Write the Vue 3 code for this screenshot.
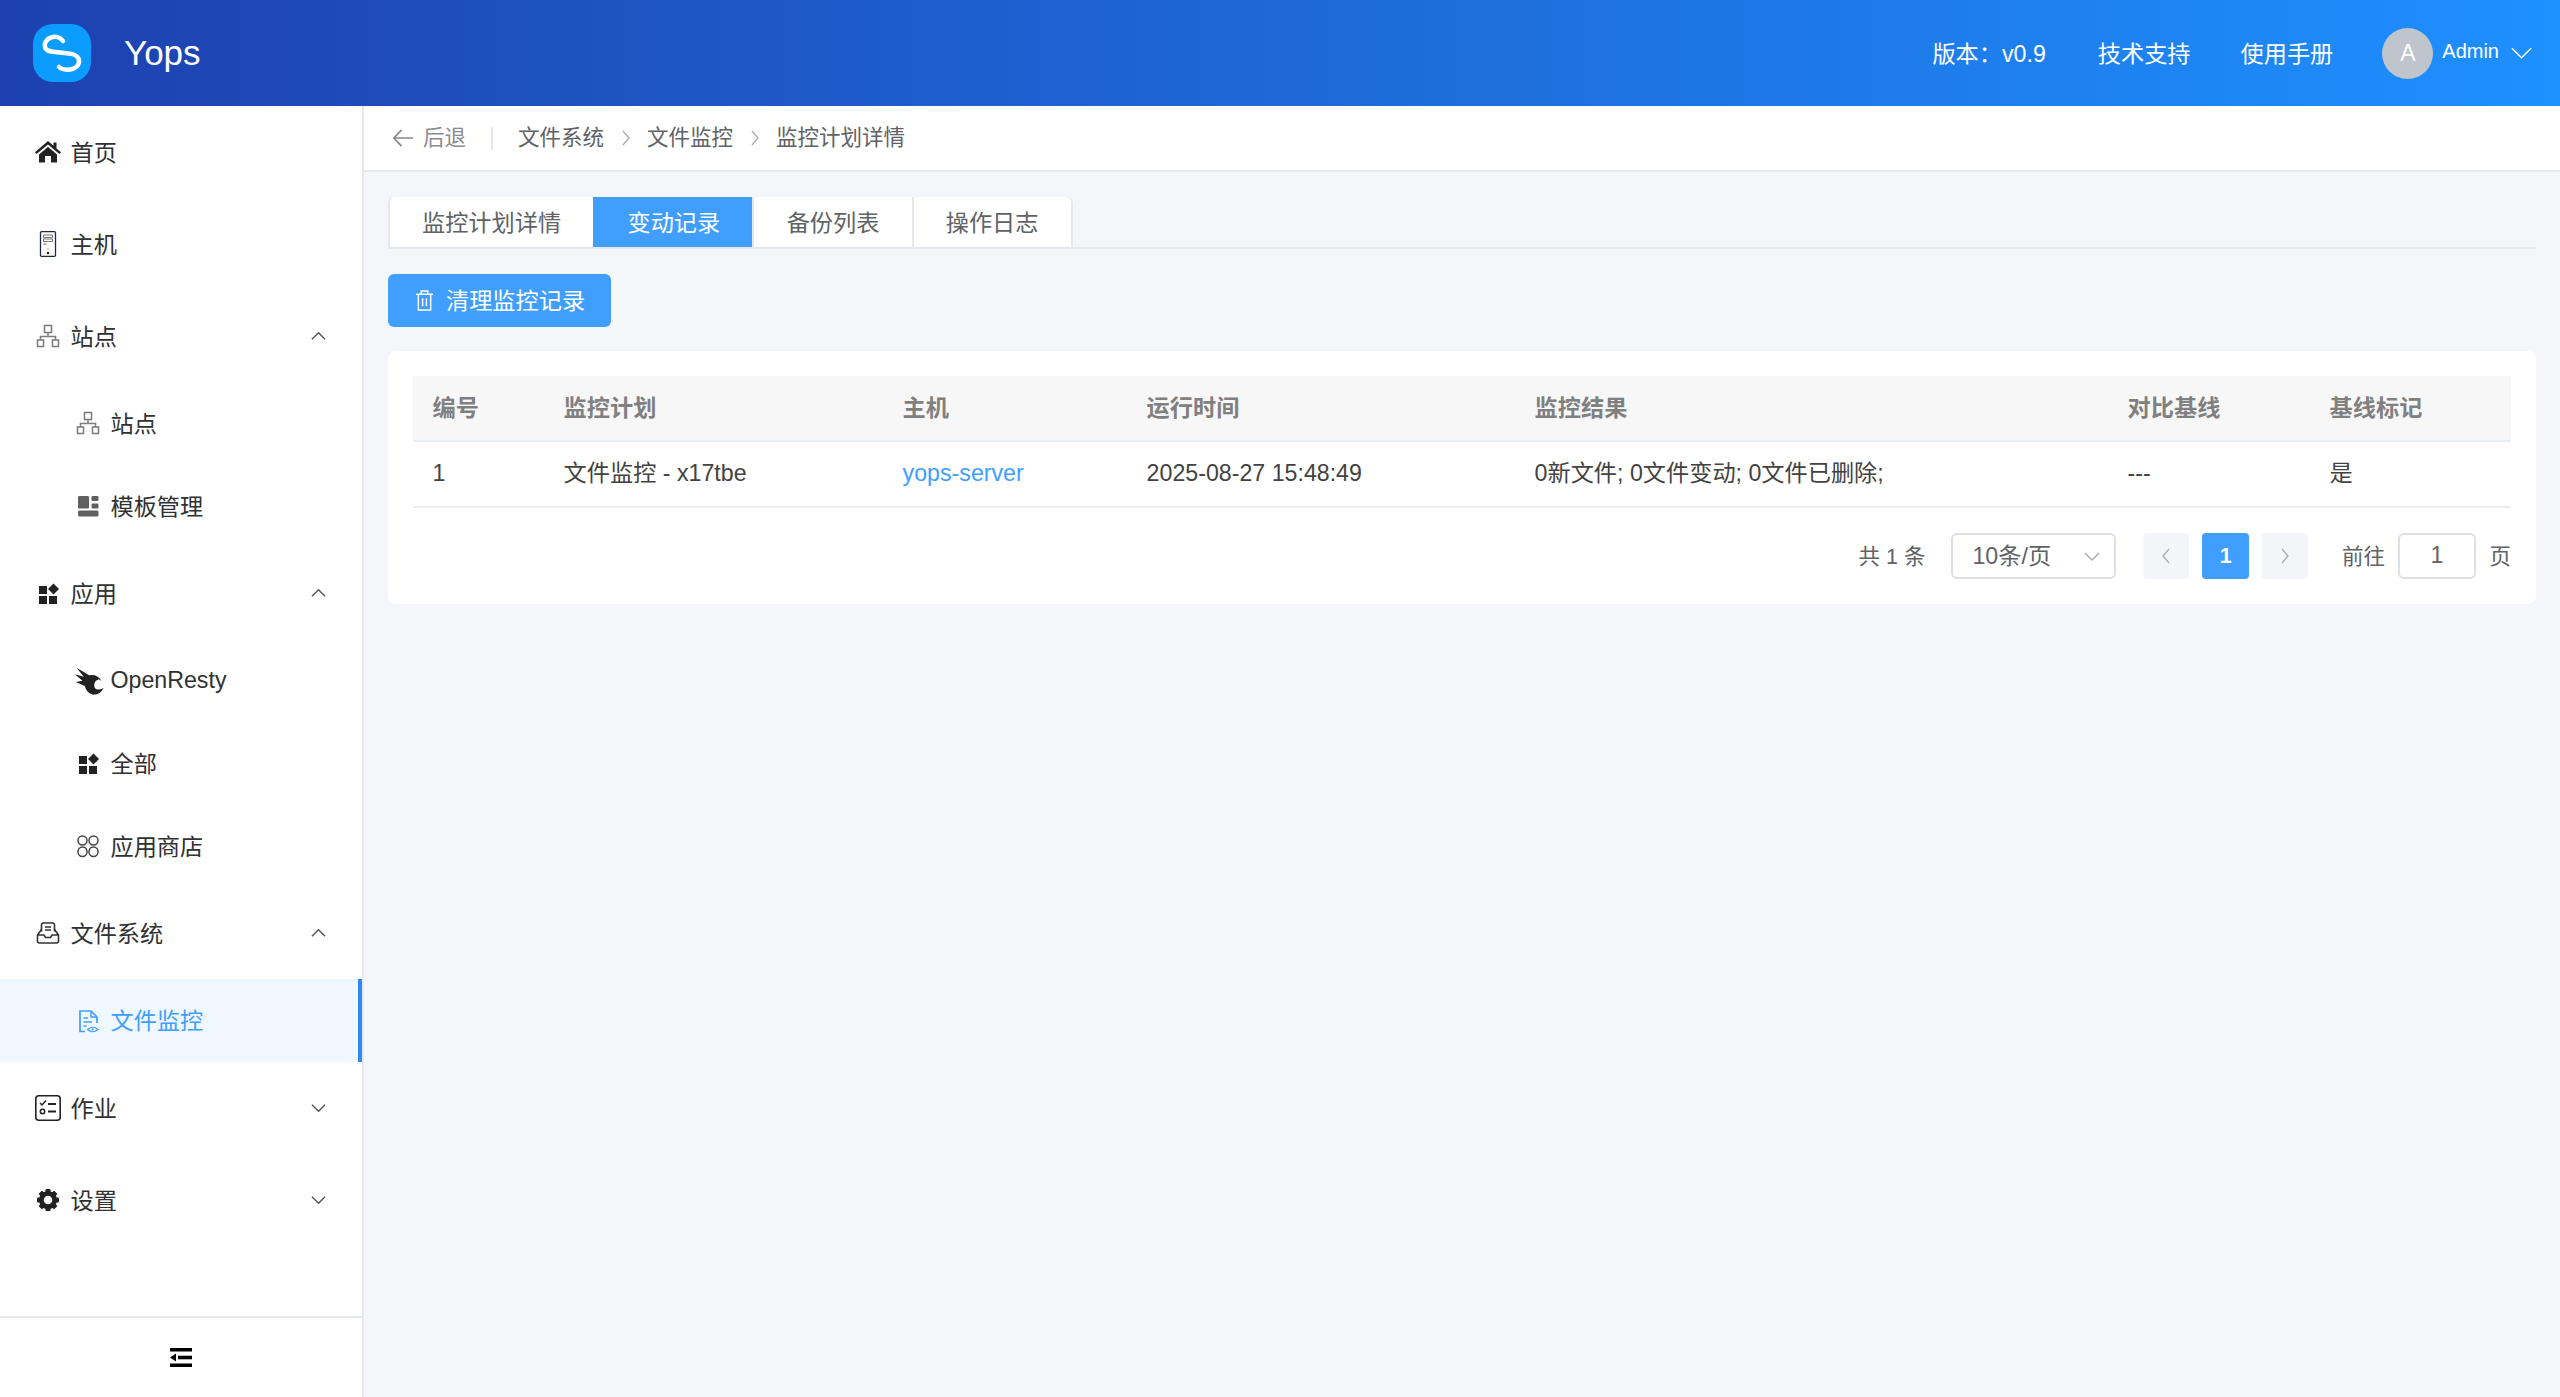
<script setup>
const heads = ["编号", "监控计划", "主机", "运行时间", "监控结果", "对比基线", "基线标记"];
const tabs = ["监控计划详情", "变动记录", "备份列表", "操作日志"];
const gearTeeth = [0, 45, 90, 135, 180, 225, 270, 315];
</script>

<template>
  <div class="layout">
    <header class="topbar">
      <svg class="logo" viewBox="0 0 58 58">
        <rect width="58" height="58" rx="20" fill="#0a9dff" />
        <path d="M30 17C27 13 22 12 18 13.500C13 15 11 20 12 23C13 27 17 27.500 22 28L36 29.500C42 30 46 33 46 37C46 42 42 45 37 45.500C32 46 28 45 26 43" fill="none" stroke="#fff" stroke-width="4.500" stroke-linecap="round" />
      </svg>
      <span class="brand">Yops</span>
      <div class="top-right">
        <span class="version">版本：v0.9</span>
        <span class="top-link support">技术支持</span>
        <span class="top-link manual">使用手册</span>
        <span class="avatar">A</span>
        <span class="admin">Admin</span>
        <svg class="admin-arrow" viewBox="0 0 22 12"><path d="M1 1L11 11L21 1" fill="none" stroke="#fff" stroke-width="1.500" /></svg>
      </div>
    </header>

    <div class="body-row">
      <aside class="sidebar">
        <nav class="menu">
          <div class="item">
            <svg class="ico" viewBox="0 0 26 24" fill="#222"><path d="M13 1L0 12.300L1.600 14L13 4.400L24.400 14L26 12.300L21.500 8.400V2.500H18.500V5.800Z" /><path d="M4 14.400L13 6.800L22 14.400V22.500H16V16H10V22.500H4Z" /></svg>
            <span>首页</span>
          </div>
          <div class="item">
            <svg class="ico" viewBox="0 0 26 26">
              <rect x="5.500" y="0.700" width="15" height="24.600" rx="1" fill="none" stroke="#1c2b4a" stroke-width="1.300" />
              <path d="M8.500 4H17.500V6.500H8.500ZM8.500 8H17.500V10.500H8.500Z" fill="none" stroke="#777" stroke-width="1" />
              <path d="M8.500 12.500H11.500V14H8.500Z" fill="#999" />
              <circle cx="13" cy="22" r="1.300" fill="#222" />
              <circle cx="13" cy="18" r="0.700" fill="#888" />
            </svg>
            <span>主机</span>
          </div>
          <div class="item">
            <svg class="ico" viewBox="0 0 26 26" fill="none" stroke="#808080" stroke-width="1.600">
              <rect x="9.500" y="2.500" width="7" height="7" />
              <rect x="2.500" y="17" width="6" height="6.500" />
              <rect x="17.500" y="17" width="6" height="6.500" />
              <path d="M13 9.500V13.500M5.500 17V13.500H20.500V17" />
            </svg>
            <span>站点</span>
            <svg class="chevron" viewBox="0 0 16 10"><path d="M1 8.500L8 1.500L15 8.500" /></svg>
          </div>
          <div class="item sub">
            <svg class="ico" viewBox="0 0 26 26" fill="none" stroke="#808080" stroke-width="1.600">
              <rect x="9.500" y="2.500" width="7" height="7" />
              <rect x="2.500" y="17" width="6" height="6.500" />
              <rect x="17.500" y="17" width="6" height="6.500" />
              <path d="M13 9.500V13.500M5.500 17V13.500H20.500V17" />
            </svg>
            <span>站点</span>
          </div>
          <div class="item sub">
            <svg class="ico" viewBox="0 0 26 26" fill="#606060">
              <rect x="3" y="3" width="11" height="12.500" rx="1.200" />
              <rect x="16.500" y="3" width="7" height="5" rx="1.200" />
              <rect x="16.500" y="10.500" width="7" height="5" rx="1.200" />
              <rect x="3" y="17.500" width="20.500" height="6" rx="1.500" />
            </svg>
            <span>模板管理</span>
          </div>
          <div class="item">
            <svg class="ico" viewBox="0 0 26 26" fill="#222">
              <rect x="4" y="6" width="8" height="8" />
              <rect x="4" y="16" width="8" height="8" />
              <rect x="14" y="16" width="8" height="8" />
              <path d="M18.500 3.500L24 9L18.500 14.500L13 9Z" />
            </svg>
            <span>应用</span>
            <svg class="chevron" viewBox="0 0 16 10"><path d="M1 8.500L8 1.500L15 8.500" /></svg>
          </div>
          <div class="item sub">
            <svg class="bird" viewBox="155 80 95 90" fill="#222"><path d="M165 85L203 108Q228 104 240 125L232 120Q218 124 218 140Q222 158 246 146Q238 166 215 166Q195 162 190 140L163 128L183 124L160 105L187 112Z" /></svg>
            <span class="latin">OpenResty</span>
          </div>
          <div class="item sub">
            <svg class="ico" viewBox="0 0 26 26" fill="#222">
              <rect x="4" y="6" width="8" height="8" />
              <rect x="4" y="16" width="8" height="8" />
              <rect x="14" y="16" width="8" height="8" />
              <path d="M18.500 3.500L24 9L18.500 14.500L13 9Z" />
            </svg>
            <span>全部</span>
          </div>
          <div class="item sub">
            <svg class="ico" viewBox="0 0 26 26" fill="none" stroke="#444" stroke-width="1.500">
              <rect x="3" y="3" width="9" height="9" rx="4.500" />
              <rect x="14" y="3" width="9" height="9" rx="4.500" />
              <rect x="3" y="14" width="9" height="9.500" rx="4.500" />
              <rect x="14" y="14" width="9" height="9.500" rx="4.500" />
            </svg>
            <span>应用商店</span>
          </div>
          <div class="item">
            <svg class="ico" viewBox="0 0 26 26" fill="none" stroke="#333" stroke-width="1.600">
              <path d="M6.500 11.500V5Q6.500 3 8.500 3H17.500Q19.500 3 19.500 5V11.500" />
              <path d="M10 7H16M10 10H16" stroke-width="1.400" />
              <path d="M6.500 9.500L2.500 15V21Q2.500 23 4.500 23H21.500Q23.500 23 23.500 21V15L19.500 9.500M2.500 15H9L10.500 17.500H15.500L17 15H23.500" />
            </svg>
            <span>文件系统</span>
            <svg class="chevron" viewBox="0 0 16 10"><path d="M1 8.500L8 1.500L15 8.500" /></svg>
          </div>
          <div class="item sub active">
            <svg class="ico" viewBox="0 0 26 26" fill="none" stroke="#409eff" stroke-width="1.700">
              <path d="M10 23.500H5V3H16L22 9V15" />
              <path d="M16 3V9H22" stroke-width="1.400" />
              <path d="M8.500 10H13M8.500 14H17M8.500 18H11.500" stroke-width="1.500" />
              <path d="M12.500 21.500Q17.500 17 23 21.500Q17.500 26 12.500 21.500Z" stroke-width="1.200" />
              <circle cx="17.700" cy="21.500" r="1.100" fill="#409eff" stroke="none" />
            </svg>
            <span>文件监控</span>
          </div>
          <div class="item">
            <svg class="ico" viewBox="0 0 26 26" fill="none" stroke="#222" stroke-width="1.500">
              <rect x="0.800" y="0.800" width="24.400" height="24.400" rx="3" stroke-width="1.600" />
              <path d="M5 8L7 10L11 5.500" />
              <circle cx="7.500" cy="16.500" r="2.200" />
              <path d="M13 9H21M13 16.500H21" stroke-width="1.800" />
            </svg>
            <span>作业</span>
            <svg class="chevron" viewBox="0 0 16 10"><path d="M1 1.500L8 8.500L15 1.500" /></svg>
          </div>
          <div class="item">
            <svg class="ico" viewBox="0 0 26 26" fill="#222">
              <rect v-for="deg in gearTeeth" :key="deg" x="10.500" y="2" width="5" height="5" rx="1" :transform="`rotate(${deg} 13 13)`" />
              <circle cx="13" cy="13" r="6.700" fill="none" stroke="#222" stroke-width="4.800" />
            </svg>
            <span>设置</span>
            <svg class="chevron" viewBox="0 0 16 10"><path d="M1 1.500L8 8.500L15 1.500" /></svg>
          </div>
        </nav>
        <div class="collapse">
          <svg viewBox="0 0 22 19" fill="#000">
            <rect width="22" height="3.500" />
            <rect y="15.500" width="22" height="3.500" />
            <rect x="8" y="7.700" width="14" height="3.600" />
            <path d="M6 5.500V13.500L0 9.500Z" />
          </svg>
        </div>
      </aside>

      <main class="main">
        <div class="crumbs">
          <svg class="back-arrow" viewBox="0 0 22 20"><path d="M10 1.500L2 10L10 18.500M2 10H22" fill="none" stroke="#888" stroke-width="1.800" /></svg>
          <span class="back-text">后退</span>
          <span class="crumb-sep"></span>
          <span class="crumb">文件系统</span>
          <svg class="crumb-arrow" viewBox="0 0 8 16"><path d="M1 1L7 8L1 15" /></svg>
          <span class="crumb">文件监控</span>
          <svg class="crumb-arrow" viewBox="0 0 8 16"><path d="M1 1L7 8L1 15" /></svg>
          <span class="crumb">监控计划详情</span>
        </div>

        <div class="content">
          <div class="tabs">
            <div class="tab-group">
              <div v-for="(t, i) in tabs" :key="t" class="tab" :class="{ on: i === 1 }">{{ t }}</div>
            </div>
          </div>

          <button class="clean-btn">
            <svg viewBox="0 0 20 22" fill="none" stroke="#fff" stroke-width="1.500">
              <path d="M1 4.500H19M6.500 4.500V1H13.500V4.500M3.500 4.500V21H16.500V4.500M8 8.500V17M12 8.500V17" />
            </svg>
            <span>清理监控记录</span>
          </button>

          <section class="card">
            <table class="grid">
              <colgroup>
                <col style="width: 131px" />
                <col style="width: 339px" />
                <col style="width: 244px" />
                <col style="width: 388px" />
                <col style="width: 593px" />
                <col style="width: 202px" />
                <col />
              </colgroup>
              <thead>
                <tr><th v-for="h in heads" :key="h">{{ h }}</th></tr>
              </thead>
              <tbody>
                <tr>
                  <td>1</td>
                  <td>文件监控 - x17tbe</td>
                  <td class="host">yops-server</td>
                  <td>2025-08-27 15:48:49</td>
                  <td>0新文件; 0文件变动; 0文件已删除;</td>
                  <td>---</td>
                  <td>是</td>
                </tr>
              </tbody>
            </table>

            <div class="pager">
              <span class="total">共 1 条</span>
              <div class="size-select">
                <span>10条/页</span>
                <svg viewBox="0 0 18 10"><path d="M1 1L9 9L17 1" fill="none" stroke="#a8abb2" stroke-width="1.500" /></svg>
              </div>
              <div class="page-btn prev"><svg viewBox="0 0 8 16"><path d="M7 1L1 8L7 15" /></svg></div>
              <div class="page-btn now">1</div>
              <div class="page-btn next"><svg viewBox="0 0 8 16"><path d="M1 1L7 8L1 15" /></svg></div>
              <span class="goto">前往</span>
              <div class="page-input">1</div>
              <span class="page-unit">页</span>
            </div>
          </section>
        </div>
      </main>
    </div>
  </div>
</template>

<style>
html,
body {
  margin: 0;
  padding: 0;
}
</style>

<style scoped>
.layout {
  height: 100vh;
  display: flex;
  flex-direction: column;
  overflow: hidden;
  font-family: "Liberation Sans", "Noto Sans CJK SC", sans-serif;
  font-size: 23.2px;
  color: #303133;
}

.topbar {
  height: 106px;
  flex: none;
  display: flex;
  align-items: center;
  padding-left: 33px;
  background: linear-gradient(90deg, #1e40af 0%, #1e90ff 100%);
  color: #fff;
}

.logo {
  width: 58px;
  height: 58px;
  flex: none;
}

.brand {
  margin-left: 33px;
  font-size: 35px;
}

.top-right {
  margin-left: auto;
  display: flex;
  align-items: center;
  padding-right: 28px;
}

.top-right > span:not(.avatar) {
  padding-bottom: 3px;
}

.top-link {
  margin-left: 50px;
}

.support {
  margin-left: 52px;
}

.avatar {
  width: 51px;
  height: 51px;
  margin-left: 49px;
  border-radius: 50%;
  background: #c0c4cc;
  display: flex;
  align-items: center;
  justify-content: center;
  font-size: 23px;
}

.top-right > .admin {
  margin-left: 9px;
  padding-bottom: 0;
  font-size: 20px;
}

.admin-arrow {
  width: 21px;
  height: 12px;
  margin-left: 12px;
}

.body-row {
  flex: 1;
  display: flex;
  min-height: 0;
}

.sidebar {
  width: 362px;
  flex: none;
  display: flex;
  flex-direction: column;
  background: #fff;
  border-right: 2px solid #e6e8ef;
}

.menu {
  flex: 1;
}

.item {
  height: 92px;
  display: flex;
  align-items: center;
  padding-left: 35px;
  padding-right: 36px;
  position: relative;
}

.item > span {
  padding-bottom: 3px;
}

.item > span.latin {
  padding-bottom: 0;
}

.item.sub {
  height: 82.7px;
  padding-left: 75px;
}

.item .ico {
  width: 26px;
  height: 26px;
  margin-right: 9.5px;
  flex: none;
}

.item .bird {
  width: 32px;
  height: 30px;
  margin-left: -2px;
  margin-right: 5.5px;
  flex: none;
}

.chevron {
  width: 15px;
  height: 10px;
  margin-left: auto;
}

.chevron path {
  fill: none;
  stroke: #555;
  stroke-width: 1.500;
}

.item.active {
  background: #f0f8ff;
  color: #409eff;
  border-right: 4px solid #2f89f5;
}

.collapse {
  height: 81px;
  flex: none;
  border-top: 2px solid #e6e8ef;
  box-sizing: border-box;
  display: flex;
  align-items: center;
  justify-content: center;
}

.collapse svg {
  width: 22px;
  height: 19px;
}

.main {
  flex: 1;
  min-width: 0;
  background: #f5f6fa;
  display: flex;
  flex-direction: column;
}

.crumbs {
  height: 66px;
  box-sizing: border-box;
  flex: none;
  display: flex;
  align-items: center;
  padding-left: 28px;
  background: #fff;
  border-bottom: 2px solid #e6e8ef;
  font-size: 21.500px;
  color: #606266;
}

.crumbs > span {
  padding-bottom: 6px;
}

.crumbs .crumb-sep {
  padding-bottom: 0;
}

.back-arrow {
  width: 21px;
  height: 20px;
  margin-right: 10px;
}

.back-text {
  color: #8a8c90;
}

.crumb-sep {
  width: 2px;
  height: 23px;
  margin: 0 25px;
  background: #e6e8ef;
}

.crumb-arrow {
  width: 8px;
  height: 16px;
  margin: 0 17px 0 18px;
}

.crumb-arrow path {
  fill: none;
  stroke: #a8abb2;
  stroke-width: 1.300;
}

.content {
  padding: 25px 24px 0;
}

.tabs {
  height: 52px;
  box-sizing: border-box;
  border-bottom: 2px solid #e4e7ed;
}

.tab-group {
  display: inline-flex;
  vertical-align: top;
  height: 52px;
  background: #fff;
  border: 2px solid #e4e7ed;
  border-top: none;
  border-radius: 6px 6px 0 0;
  box-sizing: border-box;
}

.tab {
  padding: 0 32.2px 3px;
  display: flex;
  align-items: center;
  color: #606266;
  border-left: 2px solid #e4e7ed;
}

.tab:first-child {
  border-left: none;
  padding-left: 32px;
}

.tab.on {
  background: #409eff;
  color: #fff;
  border-left-color: #409eff;
}

.clean-btn {
  margin-top: 25px;
  width: 223px;
  height: 53px;
  display: flex;
  align-items: center;
  padding: 0 0 3px 27px;
  background: #409eff;
  border: none;
  border-radius: 6px;
  color: #fff;
  font: inherit;
}

.clean-btn svg {
  width: 19px;
  height: 21px;
  margin-top: 3px;
  margin-right: 12px;
}

.card {
  margin-top: 24px;
  padding: 25px 25px;
  background: #fff;
  border-radius: 8px;
}

.grid {
  width: 100%;
  border-collapse: collapse;
  table-layout: fixed;
}

.grid th,
.grid td {
  padding: 0 0 0 19.600px;
  text-align: left;
  box-sizing: border-box;
  border-bottom: 2px solid #ebeef5;
}

.grid th {
  height: 65px;
  padding-bottom: 5px;
  background: #f7f7f8;
  color: #808080;
  font-weight: 700;
}

.grid td {
  height: 66px;
  padding-bottom: 2px;
  line-height: 30px;
  color: #424242;
}

.grid td.host {
  color: #409eff;
}

.pager {
  margin-top: 25px;
  display: flex;
  align-items: center;
  justify-content: flex-end;
  height: 46px;
  font-size: 21.5px;
  color: #606266;
}

.pager > span {
  padding-bottom: 4px;
}

.size-select {
  width: 165px;
  height: 46px;
  margin-left: 26px;
  box-sizing: border-box;
  border: 2px solid #dcdfe6;
  border-radius: 6px;
  display: flex;
  align-items: center;
  justify-content: space-between;
  padding: 0 14px 0 19px;
  font-size: 23.2px;
}

.size-select span {
  padding-bottom: 4px;
}

.size-select svg {
  width: 16px;
  height: 9px;
}

.page-btn {
  width: 46.5px;
  height: 46px;
  margin-left: 13px;
  background: #f4f5f8;
  border-radius: 4px;
  display: flex;
  align-items: center;
  justify-content: center;
}

.page-btn svg {
  width: 8px;
  height: 16px;
}

.page-btn path {
  fill: none;
  stroke: #a8abb2;
  stroke-width: 1.300;
}

.page-btn.prev {
  margin-left: 26.5px;
}

.page-btn.now {
  background: #409eff;
  color: #fff;
  font-weight: 700;
}

.goto {
  margin-left: 33.5px;
}

.page-input {
  width: 78px;
  height: 46px;
  margin-left: 13px;
  box-sizing: border-box;
  border: 2px solid #dcdfe6;
  border-radius: 6px;
  display: flex;
  align-items: center;
  justify-content: center;
  font-size: 23.2px;
  padding-bottom: 2px;
}

.page-unit {
  margin-left: 13.5px;
}
</style>
